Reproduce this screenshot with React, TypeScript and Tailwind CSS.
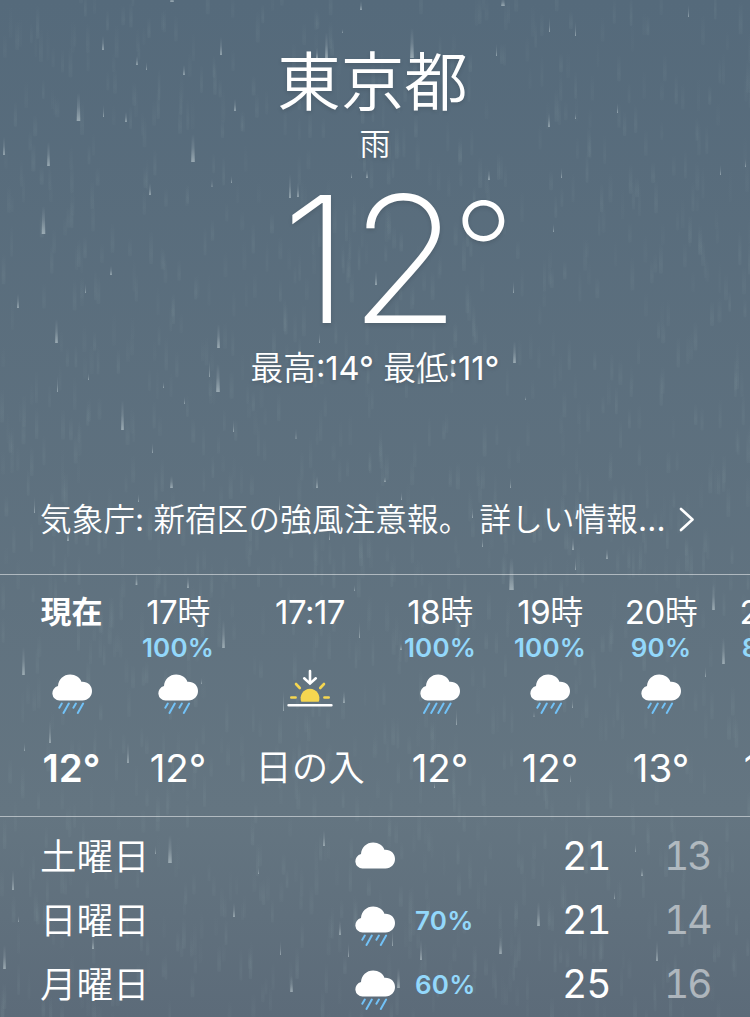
type Sky = 'rain' | 'heavy' | 'cloud' | 'sunset'

const hours: { time: string; chance?: string; sky: Sky; temp: string; width: string; now?: boolean }[] = [
  { time: '現在', sky: 'rain', temp: '12°', width: 'w-[107px]', now: true },
  { time: '17時', chance: '100%', sky: 'rain', temp: '12°', width: 'w-[106px]' },
  { time: '17:17', sky: 'sunset', temp: '日の入', width: 'w-[158px]' },
  { time: '18時', chance: '100%', sky: 'heavy', temp: '12°', width: 'w-[102px]' },
  { time: '19時', chance: '100%', sky: 'rain', temp: '12°', width: 'w-[118px]' },
  { time: '20時', chance: '90%', sky: 'rain', temp: '13°', width: 'w-[104px]' },
  { time: '21時', chance: '80%', sky: 'rain', temp: '13°', width: 'w-[118px]' },
]

const days: { name: string; sky: Sky; chance?: string; high: string; low: string }[] = [
  { name: '土曜日', sky: 'cloud', high: '21', low: '13' },
  { name: '日曜日', sky: 'rain', chance: '70%', high: '21', low: '14' },
  { name: '月曜日', sky: 'rain', chance: '60%', high: '25', low: '16' },
]

// near drops: x, bottom y, length, width
const drops = [
  [78.5, 121, 28, 4], [48.5, 166, 24, 3], [43.5, 234, 28, 4], [193, 162, 28, 4], [4, 155, 18, 2], [103, 50, 14, 2],
  [137, 65, 9, 2], [146.5, 70, 8, 1], [184, 75, 10, 2], [221, 55, 18, 2], [235, 111, 12, 2], [126, 122, 10, 2],
  [103.5, 117, 12, 1], [150, 195, 12, 2], [172, 2, 8, 4], [212, 187, 8, 1], [231.5, 183, 7, 1], [361, 10, 9, 2],
  [326.5, 58, 26, 3], [342.5, 33, 4, 1], [317, 58, 10, 2], [290, 198, 24, 2], [298, 197, 14, 2], [351.5, 178, 6, 1],
  [367, 178, 8, 2], [503, 6, 8, 4], [412, 58, 30, 4], [549.5, 32, 14, 1], [575.5, 36, 14, 1], [496.5, 56, 12, 1],
  [688.5, 17, 12, 1], [617.5, 113, 10, 1], [549, 127, 14, 2], [575.5, 119, 6, 1], [561.5, 178, 10, 1], [489, 180, 10, 2],
  [745.5, 167, 8, 1], [720.5, 175, 10, 1], [553.5, 232, 8, 1], [376, 285, 14, 2], [513.5, 293, 12, 1], [514.5, 363, 22, 3],
  [319.5, 343, 10, 1], [452.5, 375, 22, 3], [419, 384, 14, 3], [525.5, 400, 4, 1], [111, 275, 9, 2], [85.5, 293, 9, 1],
  [18, 308, 14, 2], [56.5, 343, 24, 3], [57.5, 392, 16, 1], [88.5, 380, 7, 1], [122.5, 430, 30, 3], [218.5, 348, 24, 3],
  [218, 392, 28, 4], [209.5, 377, 16, 1], [163.5, 388, 6, 1], [184.5, 404, 7, 1], [233.5, 432, 12, 1], [152.5, 453, 10, 1],
  [296, 439, 10, 1], [34.5, 513, 16, 1], [68, 541, 10, 2], [138.5, 502, 8, 1], [317, 488, 12, 2], [171.5, 488, 12, 3],
  [279.5, 510, 15, 1], [329.5, 540, 10, 1], [136.5, 585, 12, 2], [511.5, 590, 32, 5], [510.5, 488, 10, 1], [472.5, 518, 10, 1],
  [482.5, 547, 10, 1], [573, 550, 12, 2], [607, 559, 10, 2], [575.5, 570, 12, 1], [401.5, 500, 8, 1], [385, 482, 5, 2],
  [23.5, 675, 28, 3], [50, 743, 22, 2], [24.5, 751, 8, 1], [128, 763, 20, 2], [223.5, 648, 28, 3], [201.5, 684, 6, 1],
  [188, 588, 12, 2], [354.5, 591, 6, 1], [359.5, 638, 16, 1], [283.5, 711, 20, 1], [344, 703, 12, 2], [456.5, 725, 16, 1],
  [401, 650, 6, 2], [434.5, 788, 6, 1], [713.5, 610, 26, 3], [723.5, 664, 26, 3], [572.5, 708, 9, 1], [534, 717, 6, 1],
  [705.5, 677, 10, 1], [570.5, 782, 8, 1], [170, 863, 28, 4], [13, 890, 20, 2], [155.5, 854, 8, 1], [324, 846, 16, 2],
  [258.5, 874, 6, 1], [340, 935, 14, 2], [348.5, 957, 14, 1], [280.5, 955, 14, 1], [93, 949, 14, 2], [4.5, 969, 24, 3],
  [18.5, 922, 6, 1], [234, 917, 14, 2], [291.5, 992, 16, 3], [538.5, 926, 24, 3], [500.5, 954, 18, 3], [421, 960, 20, 2],
  [392.5, 946, 16, 1], [398.5, 988, 20, 3], [614.5, 899, 8, 1], [642, 876, 8, 2], [657, 961, 20, 2], [635.5, 852, 8, 1],
]

// far drops, scattered by a small seeded generator
let seed = 41
const random = () => {
  seed = (seed * 16807) % 2147483647
  return seed / 2147483647
}
const mist = Array.from({ length: 1400 }, () => ({
  x: random() * 750,
  y: random() * 1040 - 20,
  h: 18 + random() * 16,
  w: 2.5 + random() * 1.5,
  o: 0.25 + random() * 0.75,
}))

function Rain() {
  return (
    <svg className="absolute inset-0" width="750" height="1017" viewBox="0 0 750 1017" aria-hidden="true">
      <defs>
        <linearGradient id="near" x1="0" y1="0" x2="0" y2="1">
          <stop offset="0" stopColor="#cddadd" stopOpacity="0" />
          <stop offset="0.5" stopColor="#cddadd" stopOpacity="0.18" />
          <stop offset="1" stopColor="#cddadd" stopOpacity="0.55" />
        </linearGradient>
        <linearGradient id="far" x1="0" y1="0" x2="0" y2="1">
          <stop offset="0" stopColor="#8fa5aa" stopOpacity="0" />
          <stop offset="0.7" stopColor="#8fa5aa" stopOpacity="0.13" />
          <stop offset="1" stopColor="#8fa5aa" stopOpacity="0.08" />
        </linearGradient>
      </defs>
      {mist.map((d, i) => (
        <rect key={i} x={d.x} y={d.y} width={d.w} height={d.h} rx="1" fill="url(#far)" opacity={d.o} />
      ))}
      {drops.map(([x, y, h, w], i) => (
        <path key={i} d={`M${x - w * 0.3} ${y - h}h${w * 0.6}l${w * 0.15} ${h}h${-w * 0.9}z`} fill="url(#near)" />
      ))}
    </svg>
  )
}

function WeatherIcon({ sky }: { sky: Sky }) {
  if (sky === 'sunset') {
    return (
      <svg className="overflow-visible" width="46" height="40" viewBox="0 0 46 40" fill="none" strokeLinecap="round">
        <path d="M14.3 27.8a9.4 9.4 0 1 1 17.4 0z" fill="#f5d650" />
        <path d="M4.3 23.5h4.3M37.4 23.5h4.3M9 10l3.8 4M37 10l-3.8 4" stroke="#f5d650" strokeWidth="2.6" />
        <path d="M1.6 31.3h42.8M23-3v12M17.2 4.3L23 9.6l5.8-5.3" stroke="white" strokeWidth="2.6" />
      </svg>
    )
  }
  return (
    <svg width="40" height="40" viewBox="0 0 40 40">
      <path
        d="M7.4 26.5A7.3 7.3 0 0 1 6 12.1C6.3 5.3 11.6.5 18.2.5c5.3 0 9.6 2.9 11.4 7.4C35.5 7.5 40 11.5 40 17.1 40 22.5 36 26.5 30.5 26.5Z"
        fill="white"
      />
      {sky !== 'cloud' && (
        <path
          d={
            sky === 'heavy'
              ? 'M4 39l5.3-9.5M11.2 39l5.3-9.5M18.3 39l5.3-9.5M25.3 39l5.3-9.5'
              : 'M7.3 33.7l2.5-4.2M11.5 39l5.3-9.5M21.4 33.7l2.5-4.2M25.8 39l5.3-9.5'
          }
          stroke="#72c2f7"
          strokeWidth="2"
          strokeLinecap="round"
        />
      )}
    </svg>
  )
}

// digits sit a step heavier than the kanji beside them
function Mixed({ text }: { text: string }) {
  return text.split(/([\d:°.]+)/).map((part, i) =>
    i % 2 ? (
      <span key={i} className="font-normal">
        {part}
      </span>
    ) : (
      part
    )
  )
}

export default function App() {
  return (
    <div className="relative h-[1017px] w-[750px] overflow-hidden bg-linear-to-b from-[#556a7b] via-[#647581] via-80% to-[#5c6b79] font-['Inter','Noto_Sans_CJK_JP',sans-serif] text-white">
      <Rain />
      <div className="relative flex flex-col">
        <header className="flex h-[480px] flex-col items-center [text-shadow:0_2px_4px_rgba(0,0,0,0.12)]">
          <h1 className="mt-[39px] mr-[5px] h-[86px] text-[63.5px] leading-[86px] font-[350]">東京都</h1>
          <p className="mt-[1px] h-[36px] text-[31px] leading-[36px] font-[350]">雨</p>
          <p className="mt-[10px] ml-[44px] flex h-[174px] text-[176px] leading-[174px] font-extralight tracking-[-1px]">
            <span className="origin-left scale-x-[1.03]">12</span>
            <span className="-ml-[2px] text-[136px] leading-[158px]">°</span>
          </p>
          <p className="h-[44px] text-[32.7px] leading-[44px] font-[350] whitespace-nowrap">
            <Mixed text="最高:14° 最低:11°" />
          </p>
        </header>

        <div className="flex h-[94px] items-start pl-[40px] text-[31.5px] leading-[80px] font-[350] tracking-[0.2px]">
          <p className="w-[626px] whitespace-nowrap">
            <Mixed text="気象庁: 新宿区の強風注意報。 詳しい情報..." />
          </p>
          <svg className="mt-[26px] ml-[12px]" width="18" height="26" viewBox="0 0 18 26" fill="none">
            <path d="M3 3l11.5 10.5L3 24" stroke="white" strokeWidth="2.6" strokeLinecap="round" strokeLinejoin="round" />
          </svg>
        </div>

        <section className="flex h-[243px] overflow-hidden border-y border-white/50 pl-[18px]">
          {hours.map((hour) => (
            <div key={hour.time} className={`flex shrink-0 flex-col items-center ${hour.width} ${hour.now ? 'font-semibold' : 'font-[350]'}`}>
              <p className={`mt-[17px] h-[40px] leading-[40px] whitespace-nowrap ${hour.now ? 'text-[31px]' : 'text-[33px] tracking-[-0.5px]'}`}>
                {hour.now ? hour.time : <Mixed text={hour.time} />}
              </p>
              <p className="h-[30px] text-[26px] leading-[31px] font-[570] tracking-[0.2px] text-[#93d8fb]">{hour.chance}</p>
              <div className="mt-[12px] h-[40px]">
                <WeatherIcon sky={hour.sky} />
              </div>
              <p className={`mt-[28px] leading-[52px] whitespace-nowrap ${hour.sky === 'sunset' ? 'text-[36.5px]' : 'text-[38.5px]'}`}>
                {hour.now ? hour.temp : <Mixed text={hour.temp} />}
              </p>
            </div>
          ))}
        </section>

        <section className="flex flex-col pt-[7px]">
          {days.map((day) => (
            <div key={day.name} className="flex h-[64px] items-center pl-[40px]">
              <p className="mt-[2px] w-[315px] text-[36.5px] font-[350]">{day.name}</p>
              <div className="mt-[11px] h-[40px] w-[60px]">
                <WeatherIcon sky={day.sky} />
              </div>
              <p className="w-[147px] text-[26px] font-[570] tracking-[0.2px] text-[#93d8fb]">{day.chance}</p>
              <p className="w-[102px] text-[39px] tracking-[-1px] tabular-nums">{day.high}</p>
              <p className="text-[39px] tracking-[-2px] text-white/50 tabular-nums">{day.low}</p>
            </div>
          ))}
        </section>
      </div>
    </div>
  )
}
